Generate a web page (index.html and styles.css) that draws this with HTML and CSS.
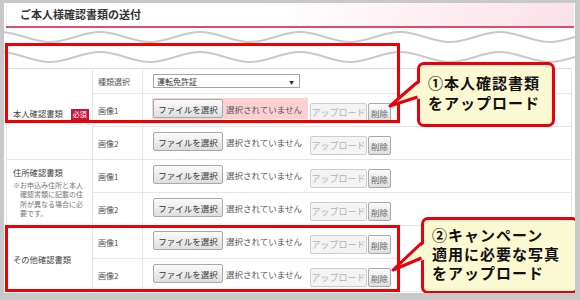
FILE: index.html
```html
<!DOCTYPE html>
<html lang="ja">
<head>
	<meta charset="UTF-8">
	<title>ご本人様確認書類の送付</title>
<link rel="stylesheet" href="styles.css">
</head>
<body>
	<div class='frame'>
		<div class='head'>
			<h1 class='head-title'>ご本人様確認書類の送付</h1>
		</div>
		<svg class='wave' width='571' height='40' viewBox='0 0 571 40'>
			<path d='M-4,4 C14,4 28,14 46,14 S78,4 96,4 S128,14 146,14 S178,4 196,4 S228,14 246,14 S278,4 296,4 S328,14 346,14 S378,4 396,4 S428,14 446,14 S478,4 496,4 S528,14 546,14 S578,4 596,4'/>
			<path d='M-4,24 C14,24 28,34 46,34 S78,24 96,24 S128,34 146,34 S178,24 196,24 S228,34 246,34 S278,24 296,24 S328,34 346,34 S378,24 396,24 S428,34 446,34 S478,24 496,24 S528,34 546,34 S578,24 596,24'/>
		</svg>
		<table class='docs'>
			<colgroup>
				<col class='col-kind'>
				<col class='col-sub'>
				<col>
			</colgroup>
			<tr class='row-type'>
				<th rowspan='3' class='kind'>本人確認書類<span class='req'>必須</span></th>
				<td class='sub'>種類選択</td>
				<td class='field'>
					<div class='select'><span>運転免許証</span><span class='select-arrow'>▼</span></div>
				</td>
			</tr>
			<tr>
				<td class='sub'>画像1</td>
				<td class='field'>
					<span class='file is-error'><button class='btn'>ファイルを選択</button><span class='file-name'>選択されていません</span></span><button class='btn btn-off'>アップロード</button><button class='btn btn-del'>削除</button>
				</td>
			</tr>
			<tr>
				<td class='sub'>画像2</td>
				<td class='field'>
					<span class='file'><button class='btn'>ファイルを選択</button><span class='file-name'>選択されていません</span></span><button class='btn btn-off'>アップロード</button><button class='btn btn-del'>削除</button>
				</td>
			</tr>
			<tr>
				<th rowspan='2' class='kind'>住所確認書類
					<p class='kind-note'>※お申込み住所と本人確認書類に記載の住所が異なる場合に必要です。</p>
				</th>
				<td class='sub'>画像1</td>
				<td class='field'>
					<span class='file'><button class='btn'>ファイルを選択</button><span class='file-name'>選択されていません</span></span><button class='btn btn-off'>アップロード</button><button class='btn btn-del'>削除</button>
				</td>
			</tr>
			<tr>
				<td class='sub'>画像2</td>
				<td class='field'>
					<span class='file'><button class='btn'>ファイルを選択</button><span class='file-name'>選択されていません</span></span><button class='btn btn-off'>アップロード</button><button class='btn btn-del'>削除</button>
				</td>
			</tr>
			<tr>
				<th rowspan='2' class='kind'>その他確認書類</th>
				<td class='sub'>画像1</td>
				<td class='field'>
					<span class='file'><button class='btn'>ファイルを選択</button><span class='file-name'>選択されていません</span></span><button class='btn btn-off'>アップロード</button><button class='btn btn-del'>削除</button>
				</td>
			</tr>
			<tr>
				<td class='sub'>画像2</td>
				<td class='field'>
					<span class='file'><button class='btn'>ファイルを選択</button><span class='file-name'>選択されていません</span></span><button class='btn btn-off'>アップロード</button><button class='btn btn-del'>削除</button>
				</td>
			</tr>
		</table>

		<!-- 注釈（赤枠と吹き出し） -->
		<div class='mark mark-1'></div>
		<div class='mark mark-2'></div>
		<div class='balloon balloon-1'>
			<span class='balloon-line'>①本人確認書類</span>
			<span class='balloon-line'>をアップロード</span>
		</div>
		<div class='balloon balloon-2'>
			<span class='balloon-line'>②キャンペーン</span>
			<span class='balloon-line'>適用に必要な写真</span>
			<span class='balloon-line'>をアップロード</span>
		</div>
		<svg class='tails' width='571' height='290' viewBox='0 0 571 290'>
			<polygon class='tail-fill' points='418,78 386,103 418,95'/>
			<polyline class='tail-line' points='413.5,79 386,103 413.5,94'/>
			<polygon class='tail-fill' points='422,239 389,267 422,256'/>
			<polyline class='tail-line' points='417.5,240 389,267 417.5,255'/>
		</svg>
	</div>
</body>
</html>
```

FILE: styles.css
```css
html,body{
	margin:0;
	padding:0;
}
body{
	width:580px;
	height:300px;
	box-sizing:border-box;
	padding:3px 5px 7px 4px;
	background-color:#c8c8c8;
	font-family:"Liberation Sans","Noto Sans CJK JP",sans-serif;
	--red:#f00000;
	--note-bg:#fbf9d2;
}
.frame{
	position:relative;
	height:290px;
	background-color:#fff;
	overflow:hidden;
}
.head{
	height:23px;
	margin:0 1px 0 2px;
	border-bottom:2px solid #d8506f;
	background:linear-gradient(100deg,#fff 0%,#fff 45%,#fdf1f4 70%,#f9e1e8 100%);
	box-shadow:inset 1px 0 0 #eee;
}
.head-title{
	margin:0;
	padding-left:14px;
	font-family:"Noto Sans CJK JP",sans-serif;
	font-size:11px;
	font-weight:bold;
	line-height:23px;
	color:#333;
}
.wave{
	display:block;
}
.wave path{
	fill:none;
	stroke:#c9c9c9;
	stroke-width:2;
}

.docs{
	width:566px;
	margin-left:2px;
	border-collapse:collapse;
	table-layout:fixed;
	font-family:"Noto Sans CJK JP",sans-serif;
	color:#444;
}
.col-kind{
	width:86px;
}
.col-sub{
	width:50px;
}
.docs th,
.docs td{
	height:32px;
	padding:0;
	border:1px solid #e6e6e6;
	vertical-align:middle;
	text-align:left;
}
.docs tr:first-child th,
.docs tr:first-child td{
	border-top-color:#dcdcdc;
}
.docs .row-type td{
	height:24px;
}
.kind{
	padding-left:6px !important;
	font-size:8.3px;
	font-weight:normal;
	line-height:10px;
}
.req{
	display:inline-block;
	margin-left:8px;
	padding:0 2px;
	background-color:#c8173a;
	color:#fff;
	font-size:7px;
	line-height:11px;
	vertical-align:middle;
}
.kind-note{
	margin:4px 7px 0 0;
	padding-left:7px;
	text-indent:-7px;
	font-size:7px;
	line-height:9.5px;
	color:#777;
}
.sub{
	padding-left:5px !important;
	font-size:8px;
	color:#555;
}
.field{
	padding-left:10px !important;
	font-size:0;
	white-space:nowrap;
}

.select{
	display:flex;
	justify-content:space-between;
	align-items:center;
	box-sizing:border-box;
	width:147px;
	height:14px;
	padding:0 5px 0 3px;
	border:1px solid #a5a5a5;
	background-color:#fff;
	font-size:8px;
	color:#333;
}
.select-arrow{
	font-size:5px;
}

.file{
	display:inline-flex;
	align-items:center;
	margin-left:-1px;
	padding:1px 2px 1px 1px;
}
.file.is-error{
	background-color:#fdd0d2;
}
.file-name{
	display:inline-block;
	width:80px;
	margin-left:3px;
	font-size:8.5px;
	color:#555;
}
.btn{
	box-sizing:border-box;
	height:19px;
	padding:0;
	border:1px solid #a9a9a9;
	border-radius:2px;
	background:linear-gradient(#fbfbfb,#dedede);
	font-family:"Noto Sans CJK JP",sans-serif;
	font-size:8.5px;
	color:#333;
	vertical-align:middle;
	width:70px;
}
.btn-off{
	width:57px;
	margin-left:2px;
	border-color:#cdcdcd;
	background:#f4f4f4;
	color:#b3b3b3;
	font-size:9px;
}
.btn-del{
	width:23px;
	margin-left:1px;
	color:#666;
}

.mark{
	position:absolute;
	left:1px;
	width:395px;
	box-sizing:border-box;
	border:3px solid var(--red);
}
.mark-1{
	top:40px;
	height:80px;
}
.mark-2{
	top:222px;
	height:67px;
}
.balloon{
	position:absolute;
	display:flex;
	flex-direction:column;
	box-sizing:border-box;
	border:3px solid #e8000f;
	border-radius:7px;
	background-color:var(--note-bg);
	font-family:"Noto Sans CJK JP",sans-serif;
	font-size:15px;
	font-weight:bold;
	letter-spacing:1px;
	color:#111;
}
.balloon-line{
	display:block;
	line-height:15px;
}
.balloon-1{
	left:413px;
	top:59px;
	width:138px;
	height:65px;
	padding:10px 0 0 8px;
	gap:5px;
}
.balloon-2{
	left:417px;
	top:214px;
	width:158px;
	height:77px;
	padding:7px 0 0 8px;
	gap:4px;
}
.tails{
	position:absolute;
	left:0;
	top:0;
	pointer-events:none;
}
.tail-fill{
	fill:var(--note-bg);
}
.tail-line{
	fill:none;
	stroke:#e8000f;
	stroke-width:3;
	stroke-linejoin:round;
}
```
